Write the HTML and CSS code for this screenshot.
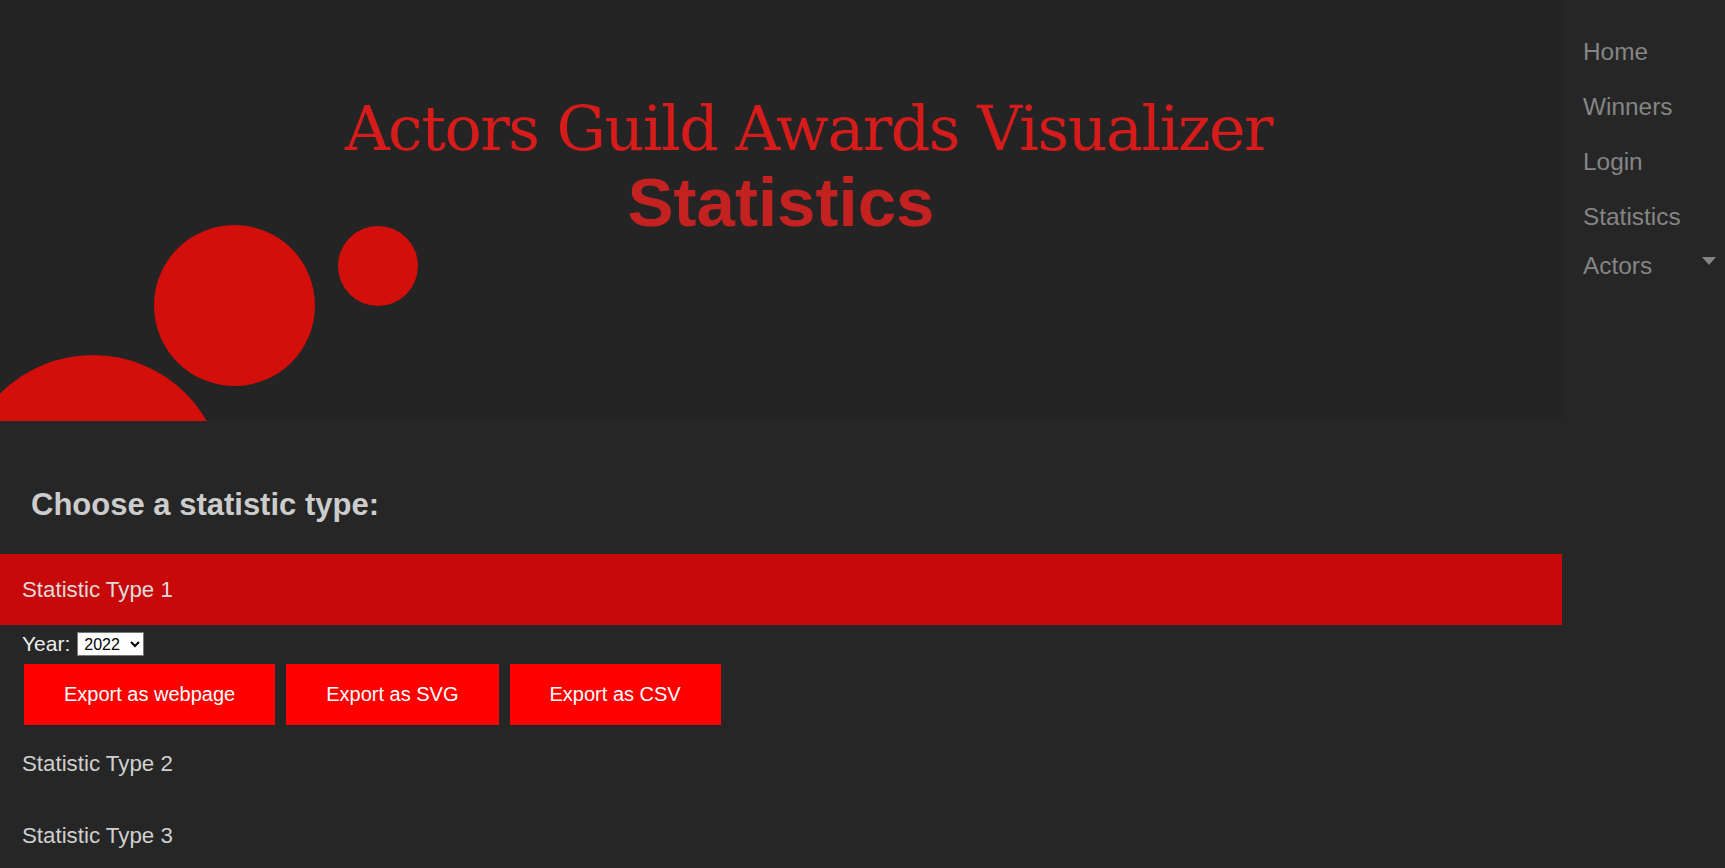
FILE: index.html
```html
<!DOCTYPE html>
<html lang="en">
<head>
<meta charset="utf-8">
<title>Statistics - Actors Guild Awards Visualizer</title>
<link rel="stylesheet" href="styles.css">
</head>
<body>
<div class="layout">
  <main class="main">
    <header class="hero">
      <svg class="hero-art" width="420" height="421" viewBox="0 0 420 421" aria-hidden="true">
        <circle cx="234.5" cy="305.5" r="80.5" fill="#d20f0a"/>
        <circle cx="378" cy="266" r="40" fill="#d20f0a"/>
        <circle cx="93" cy="486" r="131" fill="#d20f0a"/>
      </svg>
      <h1 class="hero-title">Actors Guild Awards Visualizer</h1>
      <h2 class="hero-sub">Statistics</h2>
    </header>

    <section class="stats">
      <h3 class="stats-heading">Choose a statistic type:</h3>
      <div class="stat-row active">Statistic Type 1</div>
      <div class="controls">
        <div class="year-line">
          <label for="year">Year:</label>
          <select id="year" class="year-select">
            <option>2022</option>
            <option>2021</option>
            <option>2020</option>
          </select>
        </div>
        <div class="buttons">
          <button class="export-btn">Export as webpage</button>
          <button class="export-btn">Export as SVG</button>
          <button class="export-btn">Export as CSV</button>
        </div>
      </div>
      <div class="stat-row">Statistic Type 2</div>
      <div class="stat-row">Statistic Type 3</div>
    </section>
  </main>

  <nav class="sidebar">
    <a class="nav-item" href="#">Home</a>
    <a class="nav-item" href="#">Winners</a>
    <a class="nav-item" href="#">Login</a>
    <a class="nav-item" href="#">Statistics</a>
    <a class="nav-item nav-drop" href="#">Actors <span class="caret"></span></a>
  </nav>
</div>
</body>
</html>
```

FILE: styles.css
```css
html, body {
  margin: 0;
  padding: 0;
}
body {
  background: #262626;
  font-family: "Liberation Sans", Arial, sans-serif;
  color: #cccccc;
  overflow: hidden;
}
.layout {
  display: flex;
  align-items: flex-start;
  min-height: 868px;
}
.main {
  width: 1562px;
  flex: none;
}
.hero {
  position: relative;
  height: 421px;
  background: #242424;
  overflow: hidden;
  text-align: center;
}
.hero-art {
  position: absolute;
  left: 0;
  top: 0;
}
.hero-title {
  position: relative;
  margin: 0;
  padding: 93px 0 0 55px;
  font-family: "DejaVu Serif", "Liberation Serif", serif;
  font-weight: normal;
  font-size: 62px;
  line-height: 72px;
  letter-spacing: -1.6px;
  color: #d61b1b;
}
.hero-sub {
  position: relative;
  margin: 0;
  font-family: "Liberation Sans", Arial, sans-serif;
  font-weight: bold;
  font-size: 69px;
  line-height: 76px;
  color: #c42121;
}
.stats-heading {
  margin: 0;
  padding: 64px 0 0 31px;
  height: 69px;
  font-size: 31px;
  line-height: 40px;
  font-weight: bold;
  color: #cccccc;
}
.stat-row {
  height: 72px;
  line-height: 70px;
  padding-left: 22px;
  font-size: 22.3px;
  color: #cfcfcf;
}
.stat-row.active {
  height: 71px;
  line-height: 71px;
  background: #c80909;
  color: #dcdcdc;
}
.controls {
  padding: 7px 0 4px 22px;
}
.year-line {
  display: flex;
  align-items: center;
  height: 24px;
  font-size: 21px;
  color: #eeeeee;
}
.year-select {
  margin-left: 7px;
  height: 24px;
  width: 67px;
  font-family: "Liberation Sans", Arial, sans-serif;
  font-size: 16px;
  background: #ffffff;
  color: #000000;
  border: 1px solid #767676;
  border-radius: 0;
  padding: 0 2px;
}
.buttons {
  display: flex;
  gap: 11px;
  margin-top: 8px;
  padding-left: 2px;
}
.export-btn {
  background: #ff0000;
  color: #ffffff;
  border: none;
  font-family: "Liberation Sans", Arial, sans-serif;
  font-size: 20px;
  line-height: 23px;
  padding: 19px 40px;
  cursor: pointer;
}
.sidebar {
  width: 163px;
  flex: none;
  padding-top: 24px;
  display: flex;
  flex-direction: column;
}
.nav-item {
  display: block;
  height: 55px;
  line-height: 55px;
  padding-left: 21px;
  font-size: 24.4px;
  color: #858585;
  text-decoration: none;
}
.nav-drop {
  margin-top: -6px;
  display: flex;
  justify-content: space-between;
  align-items: center;
  padding-right: 9px;
}
.caret {
  width: 0;
  height: 0;
  border-left: 7px solid transparent;
  border-right: 7px solid transparent;
  border-top: 8px solid #858585;
  margin-top: -10px;
}
```
